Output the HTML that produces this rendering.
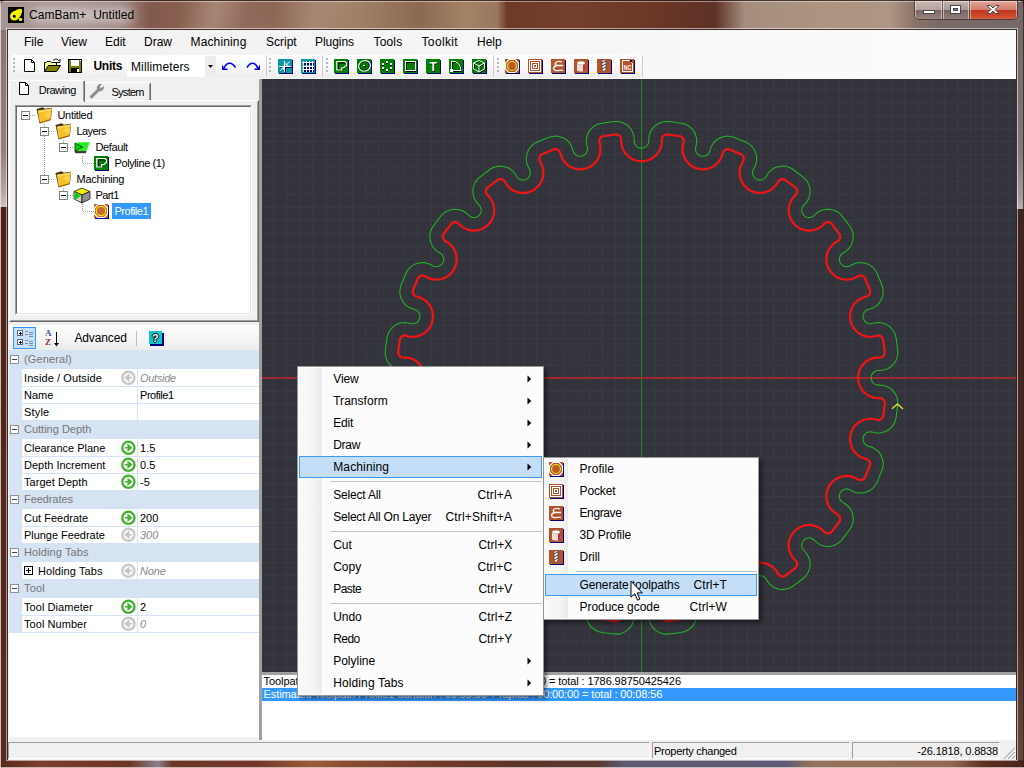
<!DOCTYPE html>
<html><head><meta charset="utf-8"><title>CamBam+ Untitled</title>
<style>
html,body{margin:0;padding:0;}
body{width:1024px;height:768px;position:relative;overflow:hidden;background:#2a0c0a;font-family:"Liberation Sans",sans-serif;font-size:11px;color:#000;}
.a{position:absolute;}
.t{position:absolute;white-space:nowrap;line-height:14px;}
.ui{font-size:12px;line-height:16px;}
/* frame */
#frame{left:0;top:0;width:1024px;height:768px;border-radius:7px 7px 6px 6px;overflow:hidden;background:#6a3426;}
#ftop{left:0;top:0;width:1024px;height:30px;background:linear-gradient(115deg,rgba(255,255,255,0) 0,rgba(255,255,255,0) 170px,rgba(255,235,220,.12) 200px,rgba(255,255,255,0) 230px,rgba(255,235,220,.10) 300px,rgba(255,255,255,0) 330px,rgba(255,255,255,0) 1024px),linear-gradient(90deg,#a69592 0,#a89692 70px,#a08a86 120px,#82594c 150px,#88604f 180px,#9c7868 215px,#906a5a 245px,#8a6252 275px,#9c7a66 310px,#a08064 360px,#8c6a52 420px,#a38266 465px,#9a785e 497px,#6e3a28 507px,#74402c 575px,#6a3626 660px,#5e3226 715px,#a68e7e 745px,#ac9480 820px,#ae9684 890px,#8a7468 915px,#786a66 940px,#74686a 1024px);}
#fleft{left:0;top:30px;width:8px;height:738px;background:linear-gradient(180deg,#8a7470 0,#94807a 120px,#b4a4a0 160px,#cfc4c0 177px,#4e2218 177px,#562a1e 738px);}
#fright{left:1016px;top:30px;width:8px;height:738px;background:linear-gradient(180deg,#726866 0,#80787a 120px,#a09898 165px,#b8b0b0 179px,#3e2420 179px,#4a2a24 600px,#64423a 700px,#684640 738px);}
#fbot{left:0;top:760px;width:1024px;height:8px;background:linear-gradient(90deg,#5a281c 0,#7a3e2c 40px,#6e3424 130px,#8a7f90 158px,#6e3626 172px,#74382a 256px,#9a5c38 310px,#8a4c30 350px,#70382a 450px,#5e3428 520px,#5a3a34 600px,#5e5c74 625px,#5c5a74 785px,#94725c 812px,#946a50 950px,#5e2e22 985px,#4a241c 1024px);}

.tb{top:55px;height:23px;border-radius:3px;background:linear-gradient(180deg,#fdfdfd 0,#f8f8f8 50%,#ededed 100%);}
.pgh{color:#757575;}
#client{left:8px;top:30px;width:1008px;height:730px;background:#f0f0f0;}
</style></head><body>
<div class="a" id="frame">
<div class="a" id="ftop"></div><div class="a" id="fleft"></div><div class="a" id="fright"></div><div class="a" id="fbot"></div>
</div>
<div class="a" id="client"></div>
<!-- title bar -->
<div class="a" style="left:0;top:0;width:1024px;height:1px;background:rgba(40,20,15,.75);"></div>
<div class="a" style="left:1px;top:1px;width:1022px;height:1px;background:rgba(255,255,255,.45);"></div>
<div class="a" style="left:0;top:1px;width:1px;height:767px;background:rgba(235,225,225,.8);"></div>
<div class="a" style="left:1023px;top:1px;width:1px;height:767px;background:rgba(60,30,25,.8);"></div>
<div class="a" style="left:0;top:767px;width:1024px;height:1px;background:rgba(225,215,210,.8);"></div>
<div class="a" style="left:6px;top:28px;width:1012px;height:733px;border:1px solid rgba(255,255,255,.55);box-sizing:border-box;"></div>
<div class="a" style="left:7px;top:29px;width:1010px;height:731px;border:1px solid rgba(50,35,35,.85);box-sizing:border-box;"></div>
<div class="a" style="left:30px;top:8px;width:104px;height:14px;border-radius:7px;background:rgba(255,255,255,.42);filter:blur(5px);"></div>
<svg class="a" style="left:8px;top:7px" width="16" height="16" viewBox="0 0 16 16"><rect width="16" height="16" fill="#000"/><path d="M2 9.5 C2 6 5 4.5 7.5 3.5 C10 2 13.2 1 14 2.5 C14.8 4 13.5 7 12 9.5 C11 11.5 9 13.5 6.5 13.5 C4 13.5 2 12 2 9.5Z" fill="#f4f400"/><circle cx="6.3" cy="9.2" r="1.5" fill="#000"/><circle cx="12.6" cy="12.4" r="1.7" fill="#f4f400"/></svg>
<div class="t ui" style="left:29px;top:7px;letter-spacing:0.05px;">CamBam+&nbsp; Untitled</div>
<!-- caption buttons -->
<div class="a" style="left:914px;top:1px;width:104px;height:19px;border-radius:0 0 5px 5px;border:1px solid rgba(60,40,40,.7);border-top:none;box-sizing:border-box;overflow:hidden;">
 <div class="a" style="left:0;top:0;width:27px;height:19px;background:linear-gradient(180deg,#c9b8b2 0,#b5a29c 45%,#7e6862 50%,#9a8680 100%);border-right:1px solid rgba(60,40,40,.6);box-shadow:inset 0 0 0 1px rgba(255,255,255,.5);"></div>
 <div class="a" style="left:28px;top:0;width:26px;height:19px;background:linear-gradient(180deg,#c4b4ae 0,#ab9a94 45%,#77645e 50%,#94827c 100%);border-right:1px solid rgba(60,40,40,.6);box-shadow:inset 0 0 0 1px rgba(255,255,255,.5);"></div>
 <div class="a" style="left:55px;top:0;width:47px;height:19px;background:linear-gradient(180deg,#e2a598 0,#d27e6c 45%,#c03a20 50%,#cf4a2c 80%,#d86a48 100%);box-shadow:inset 0 0 0 1px rgba(255,255,255,.45);"></div>
</div>
<svg class="a" style="left:914px;top:0" width="104" height="20" viewBox="0 0 104 20">
 <rect x="9.5" y="10.5" width="11" height="3" fill="#fff" stroke="#4a4650" stroke-width="1"/>
 <rect x="36.500" y="5.500" width="10" height="8" fill="#fff" stroke="#4a4650" stroke-width="1"/><rect x="39.5" y="8.5" width="4" height="2" fill="#8a7a76" stroke="#4a4650" stroke-width="1"/>
 <path d="M73 5.500 L76.500 5.500 L79 8 L81.500 5.500 L85 5.500 L81 9.500 L85 13.500 L81.500 13.500 L79 11 L76.500 13.500 L73 13.500 L77 9.500Z" fill="#fff" stroke="#4a4650" stroke-width="1" stroke-linejoin="round"/>
</svg>

<!-- menubar + toolstrip panel bg -->
<div class="a" style="left:8px;top:30px;width:1008px;height:49px;background:linear-gradient(90deg,#f1f1f1 0,#f6f6f6 50%,#fcfcfc 100%);"></div>
<div class="t ui mb" style="left:24px;top:34px;">File</div>
<div class="t ui mb" style="left:61px;top:34px;">View</div>
<div class="t ui mb" style="left:105px;top:34px;">Edit</div>
<div class="t ui mb" style="left:144px;top:34px;">Draw</div>
<div class="t ui mb" style="left:190.500px;top:34px;letter-spacing:0.144px;">Machining</div>
<div class="t ui mb" style="left:266px;top:34px;">Script</div>
<div class="t ui mb" style="left:315px;top:34px;letter-spacing:-0.051px;">Plugins</div>
<div class="t ui mb" style="left:373.500px;top:34px;letter-spacing:0.157px;">Tools</div>
<div class="t ui mb" style="left:421.500px;top:34px;letter-spacing:0.355px;">Toolkit</div>
<div class="t ui mb" style="left:477px;top:34px;">Help</div>

<!-- toolbars -->
<div class="a tb" style="left:11px;width:255px;"></div>
<div class="a tb" style="left:267px;width:55px;"></div>
<div class="a tb" style="left:323px;width:170px;"></div>
<div class="a tb" style="left:494px;width:148px;"></div>
<div class="a" style="left:127px;top:56px;width:78px;height:21px;background:#fff;"></div>
<div class="a" style="left:205px;top:56px;width:11px;height:21px;background:#ededed;"></div>
<div class="t ui" style="left:93.500px;top:58px;font-weight:bold;letter-spacing:-0.300px;">Units</div>
<div class="t ui" style="left:131px;top:59px;letter-spacing:0.122px;">Millimeters</div>
<svg class="a" style="left:8px;top:54px" width="640" height="25" viewBox="8 54 640 25" shape-rendering="crispEdges">
 <g fill="#b8b8b8"><rect x="13" y="58" width="2" height="2"/><rect x="13" y="62" width="2" height="2"/><rect x="13" y="66" width="2" height="2"/><rect x="13" y="70" width="2" height="2"/>
 <rect x="269" y="58" width="2" height="2"/><rect x="269" y="62" width="2" height="2"/><rect x="269" y="66" width="2" height="2"/><rect x="269" y="70" width="2" height="2"/>
 <rect x="326" y="58" width="2" height="2"/><rect x="326" y="62" width="2" height="2"/><rect x="326" y="66" width="2" height="2"/><rect x="326" y="70" width="2" height="2"/>
 <rect x="497" y="58" width="2" height="2"/><rect x="497" y="62" width="2" height="2"/><rect x="497" y="66" width="2" height="2"/><rect x="497" y="70" width="2" height="2"/></g>
 <g fill="#d4cccc"><rect x="266" y="56" width="1" height="21"/><rect x="322" y="56" width="1" height="21"/><rect x="493" y="56" width="1" height="21"/><rect x="642" y="56" width="1" height="21"/></g>
 <!-- new -->
 <path d="M24.500 59.500 H31.500 L34.500 62.500 V71.500 H24.500Z" fill="#fff" stroke="#000" shape-rendering="auto"/><path d="M31.500 59.500 V62.500 H34.500" fill="none" stroke="#000" shape-rendering="auto"/>
 <!-- open -->
 <g shape-rendering="auto"><path d="M44.500 71.500 V62.500 H46 L47 61.500 H50.500 L51.500 62.500 H56.500 V65.500" fill="#f4f48a" stroke="#000"/><path d="M44.500 71.500 L48.500 65.500 H60.500 L56.500 71.500Z" fill="#808000" stroke="#000"/><path d="M53 60.500 C55 58.500 57.500 58.500 59 61" fill="none" stroke="#000"/><path d="M60 59 V62.500 H56.500" fill="none" stroke="#000"/></g>
 <!-- save -->
 <rect x="68" y="59" width="14" height="14" fill="#000"/><rect x="69" y="60" width="12" height="12" fill="#808000"/><rect x="71" y="60" width="8" height="6" fill="#fff"/><rect x="71" y="68" width="8" height="4" fill="#000"/><rect x="77" y="69" width="2" height="3" fill="#fff"/><rect x="80" y="60" width="1" height="1" fill="#fff"/>
 <!-- combo arrow -->
 <path d="M208 65 H213 L210.500 68Z" fill="#000" shape-rendering="auto"/>
 <!-- undo/redo -->
 <g shape-rendering="auto" fill="none" stroke="#0000ff" stroke-width="1.6"><path d="M224 68.500 C226 63 231 60.500 235.500 67.500"/><path d="M247 67.500 C251 60.500 256 63 258 68.500"/></g>
 <path d="M222 64.500 V70 H227.500 V68.500 H224.500Z" fill="#0000ff" shape-rendering="auto"/><path d="M260 64.500 V70 H254.500 V68.500 H257.500Z" fill="#0000ff" shape-rendering="auto"/>
 <!-- teal icons -->
 <g><rect x="279" y="60" width="14" height="14" fill="#000080"/><rect x="278" y="59" width="14" height="14" fill="#0a98a8"/><rect x="285" y="67" width="1" height="6" fill="#000080"/><rect x="286" y="67" width="6" height="1" fill="#000080"/><rect x="284" y="61" width="1" height="11" fill="#fff"/><rect x="279" y="66" width="12" height="1" fill="#fff"/><g shape-rendering="auto"><path d="M290 61.500 L286 65.200 M286 62.800 V65.200 H288.300 M280 70.800 L283.500 67.700 M281.200 67.700 H283.500 V69.800" stroke="#fff" stroke-width=".9" fill="none"/><path d="M280.600 67.500 L282.500 67.500" stroke="#000080" stroke-width=".8"/></g></g>
 <g><rect x="302" y="60" width="14" height="14" fill="#000080"/><rect x="301" y="59" width="14" height="14" fill="#0a98a8"/><g fill="#000080"><rect x="304" y="63" width="2" height="2"/><rect x="307" y="63" width="2" height="2"/><rect x="310" y="63" width="2" height="2"/><rect x="313" y="63" width="1" height="2"/><rect x="304" y="67" width="2" height="2"/><rect x="307" y="67" width="2" height="2"/><rect x="310" y="67" width="2" height="2"/><rect x="313" y="67" width="1" height="2"/><rect x="304" y="70" width="2" height="2"/><rect x="307" y="70" width="2" height="2"/><rect x="310" y="70" width="2" height="2"/><rect x="313" y="70" width="1" height="2"/></g><g fill="#fff"><rect x="303" y="61" width="1" height="11"/><rect x="306" y="61" width="1" height="11"/><rect x="309" y="61" width="1" height="11"/><rect x="312" y="61" width="1" height="11"/><rect x="302" y="62" width="12" height="1"/><rect x="302" y="66" width="12" height="1"/><rect x="302" y="69" width="12" height="1"/></g></g>
 <!-- green icons -->
 <g><rect x="335" y="60" width="14" height="14" fill="#000080"/><rect x="334" y="59" width="14" height="14" fill="#008000"/><g shape-rendering="auto"><path d="M337.500 62.200 H344.500 L345.700 63.500 V65.300 L343.400 67.100 H341.300 V69.300 H337.500Z" fill="none" stroke="#000" stroke-width="1" transform="translate(.8,.8)"/><path d="M336.800 61.500 H345 L346.500 63 V65.500 L343.700 67.700 H341.700 V70 H336.800Z" fill="none" stroke="#fff" stroke-width="1.100"/></g></g>
 <g><rect x="358" y="60" width="14" height="14" fill="#000080"/><rect x="357" y="59" width="14" height="14" fill="#008000"/><g shape-rendering="auto"><ellipse cx="364.500" cy="65.900" rx="4.900" ry="4.300" fill="none" stroke="#000" stroke-width="1" transform="rotate(-20 364.500 65.900)"/><ellipse cx="364.500" cy="65.900" rx="5.900" ry="5.200" fill="none" stroke="#fff" stroke-width="1.100" transform="rotate(-20 364.500 65.900)"/></g><rect x="364" y="66" width="2" height="1" fill="#000"/><rect x="363" y="65" width="2" height="1" fill="#fff"/></g>
 <g><rect x="381" y="60" width="14" height="14" fill="#000080"/><rect x="380" y="59" width="14" height="14" fill="#008000"/><g fill="#000"><rect x="386" y="62" width="2" height="2"/><rect x="390" y="64" width="2" height="2"/><rect x="390" y="68" width="2" height="2"/><rect x="386" y="70" width="2" height="2"/><rect x="382" y="68" width="2" height="2"/><rect x="382" y="64" width="2" height="2"/></g><g fill="#fff"><rect x="386" y="61" width="2" height="2"/><rect x="390" y="63" width="2" height="2"/><rect x="390" y="67" width="2" height="2"/><rect x="386" y="69" width="2" height="2"/><rect x="382" y="67" width="2" height="2"/><rect x="382" y="63" width="2" height="2"/></g></g>
 <g><rect x="404" y="60" width="14" height="14" fill="#000080"/><rect x="403" y="59" width="14" height="14" fill="#008000"/><rect x="406.500" y="62.500" width="9" height="9" fill="none" stroke="#000" stroke-width="1"/><rect x="405.500" y="61.500" width="10" height="9" fill="none" stroke="#fff" stroke-width="1"/></g>
 <g><rect x="427" y="60" width="14" height="14" fill="#000080"/><rect x="426" y="59" width="14" height="14" fill="#008000"/><g shape-rendering="auto" font-family="Liberation Sans, sans-serif" font-weight="bold" font-size="12" text-anchor="middle"><text x="434" y="71.600" fill="#000">T</text><text x="433.200" y="70.800" fill="#fff">T</text></g></g>
 <g><rect x="450" y="60" width="14" height="14" fill="#000080"/><rect x="449" y="59" width="14" height="14" fill="#008000"/><path d="M452.500 71.300 V62 Q461.300 62.500 461.800 71.300Z" fill="none" stroke="#000" stroke-width="1" shape-rendering="auto"/><path d="M451.500 70.500 V61 Q460.500 61.500 461 70.500Z" fill="none" stroke="#fff" stroke-width="1" shape-rendering="auto"/><rect x="450" y="69" width="3" height="3" fill="#fff"/></g>
 <g><rect x="473" y="60" width="14" height="14" fill="#000080"/><rect x="472" y="59" width="14" height="14" fill="#008000"/><path d="M479.800 61.300 L485.300 63.800 V69.800 L479.800 72.800 L474.300 69.800 V63.800Z M474.300 63.800 L479.800 66.800 L485.300 63.800 M479.800 66.800 V72.800" fill="none" stroke="#000" stroke-width=".9" shape-rendering="auto"/><path d="M479 60.500 L484.500 63 V69 L479 72 L473.500 69 V63Z M473.500 63 L479 66 L484.500 63 M479 66 V72" fill="none" stroke="#fff" stroke-width="1" shape-rendering="auto"/></g>
 <!-- brown icons -->
 <g><rect x="506" y="60" width="14" height="14" fill="#000080"/><rect x="505" y="59" width="14" height="14" fill="#b4522a"/><path d="M509 59.500 H515 L518.500 63 V69 L515 72.500 H509 L505.500 69 V63Z" fill="none" stroke="#fff" stroke-width="1.100" shape-rendering="auto"/><circle cx="512" cy="66" r="4.500" fill="#b85a2c" stroke="#f4e800" stroke-width="1.200" shape-rendering="auto"/></g>
 <g><rect x="529" y="60" width="14" height="14" fill="#000080"/><rect x="528" y="59" width="14" height="14" fill="#b4522a"/><rect x="529.500" y="60.500" width="11" height="11" fill="none" stroke="#fff"/><rect x="531.500" y="62.500" width="7" height="7" fill="none" stroke="#fff"/><rect x="533.500" y="64.500" width="3" height="3" fill="none" stroke="#fff"/></g>
 <g><rect x="552" y="60" width="14" height="14" fill="#000080"/><rect x="551" y="59" width="14" height="14" fill="#b4522a"/><path d="M562 62 C558 60.500 554.500 62 555.500 64.500 C556 65.500 558 65.500 560 65.500 M563 65.500 H557 C553 66 552.500 70 556 70.500 C559 71 561 69.500 563 70.500" fill="none" stroke="#fff" stroke-width="1.300" shape-rendering="auto"/></g>
 <g><rect x="575" y="60" width="14" height="14" fill="#000080"/><rect x="574" y="59" width="14" height="14" fill="#b4522a"/><g shape-rendering="auto"><path d="M577 63 V70 C577 72 585 72 585 70 V63Z" fill="#e8e0d8"/><ellipse cx="581" cy="63" rx="4" ry="1.800" fill="#fff" stroke="#999" stroke-width=".5"/><path d="M583 65 V71.500 C584.500 71 585 70.500 585 70 V64Z" fill="#c03030"/></g></g>
 <g><rect x="598" y="60" width="14" height="14" fill="#000080"/><rect x="597" y="59" width="14" height="14" fill="#b4522a"/><g shape-rendering="auto"><path d="M602 60 H606 V69 L604 72 L602 69Z" fill="#fff" stroke="#333" stroke-width=".6"/><path d="M602 63 L606 61 M602 66 L606 64 M602 69 L606 67" stroke="#333" stroke-width="1"/></g></g>
 <g><rect x="621" y="60" width="14" height="14" fill="#000080"/><rect x="620" y="59" width="14" height="14" fill="#b4522a"/><path d="M622.500 60.500 H629.500 L632.500 63.500 V71.500 H622.500Z" fill="none" stroke="#fff" stroke-width="1" shape-rendering="auto"/><text x="627.500" y="70" font-family="Liberation Sans, sans-serif" font-weight="bold" font-size="6.500" text-anchor="middle" fill="#fff" shape-rendering="auto" textLength="7.500" lengthAdjust="spacingAndGlyphs">NC</text><rect x="630" y="60" width="2" height="2" fill="#000"/></g>
</svg>

<!-- left panel -->
<div class="a" style="left:8px;top:79px;width:251px;height:661px;background:#f0f0f0;"></div>
<!-- tab page frame -->
<div class="a" style="left:9px;top:100px;width:250px;height:222px;box-sizing:border-box;border:1px solid;border-color:#fff #696969 #696969 #fff;"></div>
<div class="a" style="left:10px;top:101px;width:248px;height:220px;box-sizing:border-box;border:1px solid;border-color:#f0f0f0 #a0a0a0 #a0a0a0 #f0f0f0;"></div>
<!-- tabs -->
<div class="a" style="left:9px;top:80px;width:76px;height:22px;background:#f0f0f0;border-radius:2px 2px 0 0;box-sizing:border-box;border:1px solid;border-color:#fff #696969 transparent #fff;border-bottom:none;"></div>
<div class="a" style="left:83px;top:81px;width:1px;height:20px;background:#a0a0a0;"></div>
<div class="a" style="left:85px;top:82px;width:66px;height:18px;background:#f0f0f0;border-radius:0 2px 0 0;box-sizing:border-box;border:1px solid;border-color:#fff #696969 transparent transparent;border-bottom:none;"></div>
<div class="a" style="left:149px;top:84px;width:1px;height:16px;background:#a0a0a0;"></div>
<svg class="a" style="left:18px;top:82px" width="14" height="14" viewBox="0 0 14 14"><path d="M1.500 .5 H7.500 L10.500 3.500 V12.500 H1.500Z" fill="#fff" stroke="#000"/><path d="M7.500 .5 V3.500 H10.500" fill="none" stroke="#000"/></svg>
<div class="t" style="left:38.700px;top:83px;letter-spacing:-0.435px;">Drawing</div>
<svg class="a" style="left:88px;top:82px" width="18" height="18" viewBox="0 0 18 18"><path d="M2.500 14 L9.500 7 C8.500 4.500 10.500 2 13.500 2.500 L11.200 4.800 L13 6.800 L15.500 4.500 C16 7.500 13.500 9.500 11.300 8.800 L4.300 15.800 C3 16.800 1.500 15.300 2.500 14Z" fill="#8c8c8c" stroke="#787878" stroke-width=".6"/></svg>
<div class="t" style="left:111.500px;top:85px;letter-spacing:-0.731px;">System</div>
<!-- tree box -->
<div class="a" style="left:15px;top:105px;width:237px;height:210px;box-sizing:border-box;border:1px solid;border-color:#a0a0a0 #fff #fff #a0a0a0;background:#fff;"></div>
<div class="a" style="left:16px;top:106px;width:235px;height:208px;box-sizing:border-box;border:1px solid;border-color:#696969 #e3e3e3 #e3e3e3 #696969;background:#fff;"></div>
<svg class="a" style="left:17px;top:107px" width="233" height="120" viewBox="17 107 233 120" shape-rendering="crispEdges">
 <g stroke="#9a9a9a" stroke-width="1" stroke-dasharray="1 1" fill="none">
  <path d="M30 115.500 H36"/><path d="M44.500 124 V179"/><path d="M49 131.500 H55"/><path d="M49 179.500 H55"/>
  <path d="M63.500 140 V143"/><path d="M68 147.500 H74"/><path d="M82.500 156 V163 M82.500 163.500 H94"/>
  <path d="M63.500 188 V191"/><path d="M68 195.500 H74"/><path d="M82.500 204 V211 M82.500 211.500 H94"/>
 </g>
 <g fill="#fff" stroke="#848484"><rect x="21.500" y="111.500" width="8" height="8"/><rect x="40.500" y="127.500" width="8" height="8"/><rect x="59.500" y="143.500" width="8" height="8"/><rect x="40.500" y="175.500" width="8" height="8"/><rect x="59.500" y="191.500" width="8" height="8"/></g>
 <g fill="#000"><rect x="23" y="115" width="5" height="1"/><rect x="42" y="131" width="5" height="1"/><rect x="61" y="147" width="5" height="1"/><rect x="42" y="179" width="5" height="1"/><rect x="61" y="195" width="5" height="1"/></g>
 <g shape-rendering="auto">
  <g id="fold"><path d="M36.500 109 L42.500 107.300 L45 108.800 L52 107.800 L51 119.500 L39.500 123.200 Z" fill="#4a3410"/><path d="M37.800 110.800 L51.800 108.600 L50.700 119.200 L39.700 122.600Z" fill="#f7bf2e"/><path d="M37.800 110.800 L51.800 108.600 L51.600 110.400 L38 112.600Z" fill="#fbd860"/><path d="M45 113 L50.800 112 L50.400 116.500 L46 117.500Z" fill="#ffd850" opacity=".7"/><path d="M39.700 122.600 L50.700 119.200 L50.500 120.600 L39.800 123.600Z" fill="#9a6c08"/></g>
  <use href="#fold" x="19" y="16"/><use href="#fold" x="19" y="64"/>
  <!-- layer icon -->
  <path d="M77.500 142.300 H89.800 L86.500 151 H74.500Z" fill="#28ee28"/><path d="M74.500 151 H86.500 L85.800 153.300 H75.300Z" fill="#3c3c3c"/><path d="M75 143 L82.500 147 L75 151Z" fill="#00d400" stroke="#0a3a0a" stroke-width=".9"/>
  <!-- polyline icon -->
  <rect x="95" y="157" width="14" height="14" fill="#000080"/><rect x="94" y="156" width="14" height="14" fill="#008000"/><path d="M97.500 159.200 H104.500 L105.700 160.500 V162.300 L103.400 164.100 H101.300 V166.300 H97.500Z" fill="none" stroke="#000" stroke-width="1" transform="translate(.8,.8)"/><path d="M96.800 158.500 H105 L106.500 160 V162.500 L103.700 164.700 H101.700 V167 H96.800Z" fill="none" stroke="#fff" stroke-width="1.200"/>
  <!-- part icon -->
  <path d="M82 188 L90 191.500 L82 195 L74 191.500Z" fill="#f0f000" stroke="#000" stroke-width=".7"/><path d="M74 191.500 L82 195 V203 L74 199Z" fill="#d0d0d0" stroke="#000" stroke-width=".7"/><path d="M82 195 L90 191.500 V199 L82 203Z" fill="#909090" stroke="#000" stroke-width=".7"/><path d="M74.500 192 L81 196 L74.500 200Z" fill="#10d010"/>
  <!-- profile icon -->
  <rect x="95" y="205" width="14" height="14" fill="#000080"/><rect x="94" y="204" width="14" height="14" fill="#c8602a"/><path d="M98 204.500 H104 L107.500 208 V214 L104 217.500 H98 L94.500 214 V208Z" fill="none" stroke="#fff" stroke-width="1.100"/><circle cx="101" cy="211" r="4.700" fill="#c86a38" stroke="#f4e400" stroke-width="1.200"/>
 </g>
</svg>
<div class="a" style="left:112px;top:203px;width:39px;height:16px;background:#3399ff;"></div>
<div class="t tr" style="left:57.500px;top:108px;letter-spacing:-0.327px;">Untitled</div>
<div class="t tr" style="left:76.500px;top:124px;letter-spacing:-0.605px;">Layers</div>
<div class="t tr" style="left:95.500px;top:140px;letter-spacing:-0.382px;">Default</div>
<div class="t tr" style="left:114.500px;top:156px;letter-spacing:-0.394px;">Polyline (1)</div>
<div class="t tr" style="left:76.500px;top:172px;letter-spacing:-0.284px;">Machining</div>
<div class="t tr" style="left:95.500px;top:188px;letter-spacing:-0.623px;">Part1</div>
<div class="t tr" style="left:114.500px;top:204px;letter-spacing:-0.464px;color:#fff;">Profile1</div>
<!-- property grid -->
<div class="a" style="left:9px;top:325px;width:250px;height:25px;background:linear-gradient(180deg,#fcfcfc 0,#f6f5f5 60%,#ebebeb 100%);"></div>
<div class="a" style="left:13px;top:327px;width:23px;height:22px;box-sizing:border-box;border:1px solid #3399ff;background:#c6e0fa;"></div>
<svg class="a" style="left:9px;top:325px" width="170" height="25" viewBox="9 325 170 25" shape-rendering="crispEdges">
 <g fill="#fff" stroke="#5a6a8a"><rect x="17.500" y="330.500" width="5" height="5"/><rect x="17.500" y="339.500" width="5" height="5"/></g>
 <g fill="#000"><rect x="19" y="333" width="3" height="1"/><rect x="20" y="332" width="1" height="3"/><rect x="19" y="342" width="3" height="1"/><rect x="20" y="341" width="1" height="3"/></g>
 <g fill="#7a8aa8"><rect x="25" y="331" width="3" height="1"/><rect x="25" y="334" width="3" height="1"/><rect x="29" y="332" width="4" height="1"/><rect x="29" y="334" width="4" height="1"/><rect x="29" y="336" width="4" height="1"/><rect x="25" y="340" width="3" height="1"/><rect x="25" y="343" width="3" height="1"/><rect x="29" y="341" width="4" height="1"/><rect x="29" y="343" width="4" height="1"/><rect x="29" y="345" width="4" height="1"/></g>
 <rect x="56" y="332" width="1" height="13" fill="#000"/><path d="M54 343 H59 L56.500 346.500Z" fill="#000" shape-rendering="auto"/>
 <rect x="136" y="331" width="1" height="15" fill="#bdbdbd"/>
 <rect x="150" y="333" width="14" height="12.500" fill="#000080"/><rect x="148.500" y="331" width="13.500" height="12.500" fill="#10c4cc"/>
</svg>
<div class="t" style="left:45px;top:328px;font:bold 9px/10px 'Liberation Serif',serif;color:#3a5aa8;">A</div>
<div class="t" style="left:45px;top:337px;font:bold 9px/10px 'Liberation Serif',serif;color:#983030;">Z</div>
<div class="t ui" style="left:74.400px;top:330px;letter-spacing:-0.120px;">Advanced</div>
<div class="t" style="left:152px;top:331.500px;font:bold 11px/13px 'Liberation Sans',sans-serif;color:#fff;text-shadow:1px 0 #000,-1px 0 #000,0 1px #000,0 -1px #000;">?</div>
<div class="a" style="left:9px;top:350px;width:250px;height:283px;background:#d6e3f2;"></div>
<div class="a" style="left:9px;top:633px;width:250px;height:104px;background:#fff;"></div>
<div class="t pgh" style="left:24px;top:352px;letter-spacing:0.148px;">(General)</div>
<div class="a" style="left:22px;top:369px;width:115px;height:17px;background:#fff;"></div>
<div class="a" style="left:138px;top:369px;width:121px;height:17px;background:#fff;"></div>
<div class="t" style="left:24px;top:371px;letter-spacing:0.088px;">Inside / Outside</div>
<div class="t" style="left:140px;top:371px;font-style:italic;color:#8a8a8a;letter-spacing:-0.305px;">Outside</div>
<div class="a" style="left:22px;top:387px;width:115px;height:16px;background:#fff;"></div>
<div class="a" style="left:138px;top:387px;width:121px;height:16px;background:#fff;"></div>
<div class="t" style="left:24px;top:388px;">Name</div>
<div class="t" style="left:140px;top:388px;letter-spacing:-0.452px;">Profile1</div>
<div class="a" style="left:22px;top:404px;width:115px;height:16px;background:#fff;"></div>
<div class="a" style="left:138px;top:404px;width:121px;height:16px;background:#fff;"></div>
<div class="t" style="left:24px;top:405px;letter-spacing:0.186px;">Style</div>
<div class="t" style="left:140px;top:405px;"></div>
<div class="t pgh" style="left:24px;top:422px;">Cutting Depth</div>
<div class="a" style="left:22px;top:439px;width:115px;height:17px;background:#fff;"></div>
<div class="a" style="left:138px;top:439px;width:121px;height:17px;background:#fff;"></div>
<div class="t" style="left:24px;top:441px;">Clearance Plane</div>
<div class="t" style="left:140px;top:441px;">1.5</div>
<div class="a" style="left:22px;top:457px;width:115px;height:16px;background:#fff;"></div>
<div class="a" style="left:138px;top:457px;width:121px;height:16px;background:#fff;"></div>
<div class="t" style="left:24px;top:458px;">Depth Increment</div>
<div class="t" style="left:140px;top:458px;">0.5</div>
<div class="a" style="left:22px;top:474px;width:115px;height:16px;background:#fff;"></div>
<div class="a" style="left:138px;top:474px;width:121px;height:16px;background:#fff;"></div>
<div class="t" style="left:24px;top:475px;letter-spacing:0.047px;">Target Depth</div>
<div class="t" style="left:140px;top:475px;">-5</div>
<div class="t pgh" style="left:24px;top:492px;letter-spacing:-0.074px;">Feedrates</div>
<div class="a" style="left:22px;top:509px;width:115px;height:17px;background:#fff;"></div>
<div class="a" style="left:138px;top:509px;width:121px;height:17px;background:#fff;"></div>
<div class="t" style="left:24px;top:511px;">Cut Feedrate</div>
<div class="t" style="left:140px;top:511px;">200</div>
<div class="a" style="left:22px;top:527px;width:115px;height:16px;background:#fff;"></div>
<div class="a" style="left:138px;top:527px;width:121px;height:16px;background:#fff;"></div>
<div class="t" style="left:24px;top:528px;letter-spacing:-0.040px;">Plunge Feedrate</div>
<div class="t" style="left:140px;top:528px;font-style:italic;color:#8a8a8a;">300</div>
<div class="t pgh" style="left:24px;top:545px;letter-spacing:0.098px;">Holding Tabs</div>
<div class="a" style="left:22px;top:562px;width:115px;height:17px;background:#fff;"></div>
<div class="a" style="left:138px;top:562px;width:121px;height:17px;background:#fff;"></div>
<div class="t" style="left:38px;top:564px;letter-spacing:0.098px;">Holding Tabs</div>
<div class="t" style="left:140px;top:564px;font-style:italic;color:#8a8a8a;letter-spacing:-0.178px;">None</div>
<div class="t pgh" style="left:24px;top:581px;letter-spacing:0.153px;">Tool</div>
<div class="a" style="left:22px;top:598px;width:115px;height:17px;background:#fff;"></div>
<div class="a" style="left:138px;top:598px;width:121px;height:17px;background:#fff;"></div>
<div class="t" style="left:24px;top:600px;letter-spacing:0.071px;">Tool Diameter</div>
<div class="t" style="left:140px;top:600px;">2</div>
<div class="a" style="left:22px;top:616px;width:115px;height:16px;background:#fff;"></div>
<div class="a" style="left:138px;top:616px;width:121px;height:16px;background:#fff;"></div>
<div class="t" style="left:24px;top:617px;letter-spacing:0.057px;">Tool Number</div>
<div class="t" style="left:140px;top:617px;font-style:italic;color:#8a8a8a;">0</div>
<svg class="a" style="left:9px;top:350px" width="250" height="290" viewBox="9 350 250 290" shape-rendering="crispEdges"><rect x="10.5" y="355.5" width="8" height="8" fill="#fff" stroke="#919191"/><rect x="12" y="359" width="5" height="1" fill="#444"/><g shape-rendering="auto"><circle cx="128.400" cy="377.8" r="6.100" fill="#f8f8f8" stroke="#c9c9c9" stroke-width="2.400"/><path d="M132 377.8 H127.800 M128.600 375.2 L125.400 377.8 L128.600 380.4 Z" fill="#c4c4c4" stroke="#c4c4c4" stroke-width="1.500"/></g><rect x="10.5" y="425.5" width="8" height="8" fill="#fff" stroke="#919191"/><rect x="12" y="429" width="5" height="1" fill="#444"/><g shape-rendering="auto"><circle cx="128.400" cy="447.8" r="6.100" fill="#fff" stroke="#45b232" stroke-width="2.400"/><path d="M124.800 447.8 H129 M128.200 445.2 L131.400 447.8 L128.200 450.4 Z" fill="#45b232" stroke="#45b232" stroke-width="1.500"/></g><g shape-rendering="auto"><circle cx="128.400" cy="464.8" r="6.100" fill="#fff" stroke="#45b232" stroke-width="2.400"/><path d="M124.800 464.8 H129 M128.200 462.2 L131.400 464.8 L128.200 467.4 Z" fill="#45b232" stroke="#45b232" stroke-width="1.500"/></g><g shape-rendering="auto"><circle cx="128.400" cy="481.8" r="6.100" fill="#fff" stroke="#45b232" stroke-width="2.400"/><path d="M124.800 481.8 H129 M128.200 479.2 L131.400 481.8 L128.200 484.4 Z" fill="#45b232" stroke="#45b232" stroke-width="1.500"/></g><rect x="10.5" y="495.5" width="8" height="8" fill="#fff" stroke="#919191"/><rect x="12" y="499" width="5" height="1" fill="#444"/><g shape-rendering="auto"><circle cx="128.400" cy="517.8" r="6.100" fill="#fff" stroke="#45b232" stroke-width="2.400"/><path d="M124.800 517.8 H129 M128.200 515.2 L131.400 517.8 L128.200 520.4 Z" fill="#45b232" stroke="#45b232" stroke-width="1.500"/></g><g shape-rendering="auto"><circle cx="128.400" cy="534.8" r="6.100" fill="#f8f8f8" stroke="#c9c9c9" stroke-width="2.400"/><path d="M132 534.8 H127.800 M128.600 532.2 L125.400 534.8 L128.600 537.4 Z" fill="#c4c4c4" stroke="#c4c4c4" stroke-width="1.500"/></g><rect x="10.5" y="548.5" width="8" height="8" fill="#fff" stroke="#919191"/><rect x="12" y="552" width="5" height="1" fill="#444"/><rect x="24.5" y="566.5" width="8" height="8" fill="#fff" stroke="#000"/><rect x="26" y="570" width="5" height="1" fill="#000"/><rect x="28" y="568" width="1" height="5" fill="#000"/><g shape-rendering="auto"><circle cx="128.400" cy="570.8" r="6.100" fill="#f8f8f8" stroke="#c9c9c9" stroke-width="2.400"/><path d="M132 570.8 H127.800 M128.600 568.2 L125.400 570.8 L128.600 573.4 Z" fill="#c4c4c4" stroke="#c4c4c4" stroke-width="1.500"/></g><rect x="10.5" y="584.5" width="8" height="8" fill="#fff" stroke="#919191"/><rect x="12" y="588" width="5" height="1" fill="#444"/><g shape-rendering="auto"><circle cx="128.400" cy="606.8" r="6.100" fill="#fff" stroke="#45b232" stroke-width="2.400"/><path d="M124.800 606.8 H129 M128.200 604.2 L131.400 606.8 L128.200 609.4 Z" fill="#45b232" stroke="#45b232" stroke-width="1.500"/></g><g shape-rendering="auto"><circle cx="128.400" cy="623.8" r="6.100" fill="#f8f8f8" stroke="#c9c9c9" stroke-width="2.400"/><path d="M132 623.8 H127.800 M128.600 621.2 L125.400 623.8 L128.600 626.4 Z" fill="#c4c4c4" stroke="#c4c4c4" stroke-width="1.500"/></g></svg>
<!-- splitter -->
<div class="a" style="left:259px;top:79px;width:3px;height:661px;background:#a0a0a0;"></div>

<!-- canvas -->
<svg class="a" style="left:262px;top:79px" width="754" height="593" viewBox="262 79 754 593">
 <defs><pattern id="grid" x="641.3" y="377.7" width="13.15" height="13.15" patternUnits="userSpaceOnUse"><rect width="13.15" height="13.15" fill="#33333c"/><rect x="0" y="0" width="1" height="13.15" fill="#3a3a44"/><rect x="0" y="0" width="13.15" height="1" fill="#3a3a44"/></pattern></defs>
 <rect x="262" y="79" width="754" height="593" fill="url(#grid)"/>
 <rect x="641" y="79" width="1" height="593" fill="#1c8a1c"/>
 <rect x="262" y="377.200" width="754" height="1.400" fill="#cc2428"/>
 <path d="M634.2 140.9 L634.3 141.9 L634.4 142.8 L634.8 143.7 L635.2 144.6 L635.7 145.3 L636.3 146.1 L637.1 146.7 L637.9 147.2 L638.7 147.6 L639.6 148.0 L640.5 148.1 L641.5 148.2 L642.5 148.1 L643.4 148.0 L644.3 147.6 L645.1 147.2 L645.9 146.7 L646.7 146.1 L647.3 145.3 L647.8 144.6 L648.2 143.7 L648.6 142.8 L648.7 141.9 L648.8 140.9 L648.8 139.5 L649.2 135.7 L650.4 132.0 L652.3 128.7 L654.9 125.9 L658.1 123.7 L661.6 122.2 L665.3 121.5 L669.1 121.6 L681.1 123.2 L684.8 124.1 L688.3 125.8 L691.3 128.1 L693.7 131.0 L695.5 134.4 L696.5 138.1 L696.7 141.9 L696.1 145.7 L695.8 147.1 L695.6 148.0 L695.5 149.0 L695.6 149.9 L695.8 150.9 L696.1 151.8 L696.5 152.6 L697.0 153.4 L697.7 154.1 L698.4 154.8 L699.2 155.3 L700.0 155.7 L700.9 156.0 L701.9 156.2 L702.8 156.3 L703.8 156.2 L704.7 156.0 L705.6 155.7 L706.5 155.3 L707.3 154.8 L708.0 154.1 L708.6 153.4 L709.1 152.6 L709.6 151.8 L709.9 150.9 L710.2 149.5 L711.6 145.9 L713.7 142.7 L716.4 140.0 L719.7 138.0 L723.3 136.7 L727.0 136.1 L730.8 136.4 L734.5 137.5 L745.6 142.1 L749.0 143.9 L751.9 146.4 L754.2 149.5 L755.8 153.0 L756.6 156.7 L756.7 160.5 L755.9 164.3 L754.3 167.7 L753.6 169.0 L753.2 169.8 L752.9 170.7 L752.7 171.7 L752.6 172.6 L752.7 173.6 L752.9 174.5 L753.2 175.4 L753.6 176.3 L754.2 177.1 L754.8 177.8 L755.5 178.4 L756.3 179.0 L757.2 179.4 L758.1 179.7 L759.0 179.9 L760.0 179.9 L760.9 179.9 L761.8 179.7 L762.7 179.4 L763.6 179.0 L764.4 178.4 L765.1 177.8 L765.7 177.1 L766.3 176.3 L767.0 175.0 L769.2 172.0 L772.1 169.4 L775.4 167.5 L779.1 166.4 L782.9 166.0 L786.7 166.5 L790.3 167.8 L793.5 169.8 L803.1 177.1 L805.9 179.7 L808.0 182.9 L809.4 186.4 L810.1 190.2 L809.9 194.0 L809.0 197.7 L807.3 201.1 L804.9 204.1 L803.9 205.1 L803.2 205.8 L802.7 206.6 L802.3 207.5 L802.0 208.4 L801.8 209.3 L801.7 210.3 L801.8 211.2 L802.0 212.2 L802.3 213.1 L802.7 213.9 L803.2 214.7 L803.9 215.4 L804.6 216.1 L805.4 216.6 L806.2 217.0 L807.1 217.3 L808.1 217.5 L809.0 217.6 L810.0 217.5 L810.9 217.3 L811.8 217.0 L812.7 216.6 L813.5 216.1 L814.2 215.4 L815.2 214.4 L818.2 212.0 L821.6 210.3 L825.3 209.4 L829.1 209.2 L832.9 209.9 L836.4 211.3 L839.6 213.4 L842.2 216.2 L849.5 225.8 L851.5 229.0 L852.8 232.6 L853.3 236.4 L852.9 240.2 L851.8 243.9 L849.9 247.2 L847.3 250.1 L844.3 252.3 L843.0 253.0 L842.2 253.6 L841.5 254.2 L840.9 254.9 L840.3 255.7 L839.9 256.6 L839.6 257.5 L839.4 258.4 L839.4 259.3 L839.4 260.3 L839.6 261.2 L839.9 262.1 L840.3 263.0 L840.9 263.8 L841.5 264.5 L842.2 265.1 L843.0 265.7 L843.9 266.1 L844.8 266.4 L845.7 266.6 L846.7 266.6 L847.6 266.6 L848.6 266.4 L849.5 266.1 L850.3 265.7 L851.6 265.0 L855.0 263.4 L858.8 262.6 L862.6 262.7 L866.3 263.5 L869.8 265.1 L872.9 267.4 L875.4 270.3 L877.2 273.7 L881.8 284.8 L882.9 288.5 L883.2 292.3 L882.6 296.0 L881.3 299.6 L879.3 302.9 L876.6 305.6 L873.4 307.7 L869.8 309.1 L868.4 309.4 L867.5 309.7 L866.7 310.2 L865.9 310.7 L865.2 311.3 L864.5 312.0 L864.0 312.8 L863.6 313.7 L863.3 314.6 L863.1 315.5 L863.0 316.5 L863.1 317.4 L863.3 318.4 L863.6 319.3 L864.0 320.1 L864.5 320.9 L865.2 321.6 L865.9 322.3 L866.7 322.8 L867.5 323.2 L868.4 323.5 L869.4 323.7 L870.3 323.8 L871.3 323.7 L872.2 323.5 L873.6 323.2 L877.4 322.6 L881.2 322.8 L884.9 323.8 L888.3 325.6 L891.2 328.0 L893.5 331.0 L895.2 334.5 L896.1 338.2 L897.7 350.2 L897.8 354.0 L897.1 357.7 L895.6 361.2 L893.4 364.4 L890.6 367.0 L887.3 368.9 L883.6 370.1 L879.8 370.5 L878.4 370.5 L877.4 370.6 L876.5 370.7 L875.6 371.1 L874.8 371.5 L874.0 372.0 L873.2 372.6 L872.6 373.4 L872.1 374.1 L871.7 375.0 L871.3 375.9 L871.2 376.8 L871.1 377.8 L871.2 378.8 L871.3 379.7 L871.7 380.6 L872.1 381.4 L872.6 382.2 L873.2 383.0 L874.0 383.6 L874.8 384.1 L875.6 384.5 L876.5 384.9 L877.4 385.0 L878.4 385.1 L879.8 385.1 L883.6 385.5 L887.3 386.7 L890.6 388.6 L893.4 391.2 L895.6 394.4 L897.1 397.9 L897.8 401.6 L897.7 405.4 L896.1 417.4 L895.2 421.1 L893.5 424.6 L891.2 427.6 L888.3 430.0 L884.9 431.8 L881.2 432.8 L877.4 433.0 L873.6 432.4 L872.2 432.1 L871.3 431.9 L870.3 431.8 L869.4 431.9 L868.4 432.1 L867.5 432.4 L866.7 432.8 L865.9 433.3 L865.2 434.0 L864.5 434.7 L864.0 435.5 L863.6 436.3 L863.3 437.2 L863.1 438.2 L863.0 439.1 L863.1 440.1 L863.3 441.0 L863.6 441.9 L864.0 442.8 L864.5 443.6 L865.2 444.3 L865.9 444.9 L866.7 445.4 L867.5 445.9 L868.4 446.2 L869.8 446.5 L873.4 447.9 L876.6 450.0 L879.3 452.7 L881.3 456.0 L882.6 459.6 L883.2 463.3 L882.9 467.1 L881.8 470.8 L877.2 481.9 L875.4 485.3 L872.9 488.2 L869.8 490.5 L866.3 492.1 L862.6 492.9 L858.8 493.0 L855.0 492.2 L851.6 490.6 L850.3 489.9 L849.5 489.5 L848.6 489.2 L847.6 489.0 L846.7 488.9 L845.7 489.0 L844.8 489.2 L843.9 489.5 L843.0 489.9 L842.2 490.5 L841.5 491.1 L840.9 491.8 L840.3 492.6 L839.9 493.5 L839.6 494.4 L839.4 495.3 L839.4 496.2 L839.4 497.2 L839.6 498.1 L839.9 499.0 L840.3 499.9 L840.9 500.7 L841.5 501.4 L842.2 502.0 L843.0 502.6 L844.3 503.3 L847.3 505.5 L849.9 508.4 L851.8 511.7 L852.9 515.4 L853.3 519.2 L852.8 523.0 L851.5 526.6 L849.5 529.8 L842.2 539.4 L839.6 542.2 L836.4 544.3 L832.9 545.7 L829.1 546.4 L825.3 546.2 L821.6 545.3 L818.2 543.6 L815.2 541.2 L814.2 540.2 L813.5 539.5 L812.7 539.0 L811.8 538.6 L810.9 538.3 L810.0 538.1 L809.0 538.0 L808.1 538.1 L807.1 538.3 L806.2 538.6 L805.4 539.0 L804.6 539.5 L803.9 540.2 L803.2 540.9 L802.7 541.7 L802.3 542.5 L802.0 543.4 L801.8 544.4 L801.7 545.3 L801.8 546.3 L802.0 547.2 L802.3 548.1 L802.7 549.0 L803.2 549.8 L803.9 550.5 L804.9 551.5 L807.3 554.5 L809.0 557.9 L809.9 561.6 L810.1 565.4 L809.4 569.2 L808.0 572.7 L805.9 575.9 L803.1 578.5 L793.5 585.8 L790.3 587.8 L786.7 589.1 L782.9 589.6 L779.1 589.2 L775.4 588.1 L772.1 586.2 L769.2 583.6 L767.0 580.6 L766.3 579.3 L765.7 578.5 L765.1 577.8 L764.4 577.2 L763.6 576.6 L762.7 576.2 L761.8 575.9 L760.9 575.7 L760.0 575.7 L759.0 575.7 L758.1 575.9 L757.2 576.2 L756.3 576.6 L755.5 577.2 L754.8 577.8 L754.2 578.5 L753.6 579.3 L753.2 580.2 L752.9 581.1 L752.7 582.0 L752.7 583.0 L752.7 583.9 L752.9 584.9 L753.2 585.8 L753.6 586.6 L754.3 587.9 L755.9 591.3 L756.7 595.1 L756.6 598.9 L755.8 602.6 L754.2 606.1 L751.9 609.2 L749.0 611.7 L745.6 613.5 L734.5 618.1 L730.8 619.2 L727.0 619.5 L723.3 618.9 L719.7 617.6 L716.4 615.6 L713.7 612.9 L711.6 609.7 L710.2 606.1 L709.9 604.7 L709.6 603.8 L709.1 603.0 L708.6 602.2 L708.0 601.5 L707.3 600.8 L706.5 600.3 L705.6 599.9 L704.7 599.6 L703.8 599.4 L702.8 599.3 L701.9 599.4 L700.9 599.6 L700.0 599.9 L699.2 600.3 L698.4 600.8 L697.7 601.5 L697.0 602.2 L696.5 603.0 L696.1 603.8 L695.8 604.7 L695.6 605.7 L695.5 606.6 L695.6 607.6 L695.8 608.5 L696.1 609.9 L696.7 613.7 L696.5 617.5 L695.5 621.2 L693.7 624.6 L691.3 627.5 L688.3 629.8 L684.8 631.5 L681.1 632.4 L669.1 634.0 L665.3 634.1 L661.6 633.4 L658.1 631.9 L654.9 629.7 L652.3 626.9 L650.4 623.6 L649.2 619.9 L648.8 616.1 L648.8 614.7 L648.7 613.7 L648.6 612.8 L648.2 611.9 L647.8 611.0 L647.3 610.3 L646.7 609.5 L645.9 608.9 L645.1 608.4 L644.3 608.0 L643.4 607.6 L642.5 607.5 L641.5 607.4 L640.5 607.5 L639.6 607.6 L638.7 608.0 L637.9 608.4 L637.1 608.9 L636.3 609.5 L635.7 610.3 L635.2 611.0 L634.8 611.9 L634.4 612.8 L634.3 613.7 L634.2 614.7 L634.2 616.1 L633.8 619.9 L632.6 623.6 L630.7 626.9 L628.1 629.7 L624.9 631.9 L621.4 633.4 L617.7 634.1 L613.9 634.0 L601.9 632.4 L598.2 631.5 L594.7 629.8 L591.7 627.5 L589.3 624.6 L587.5 621.2 L586.5 617.5 L586.3 613.7 L586.9 609.9 L587.2 608.5 L587.4 607.6 L587.5 606.6 L587.4 605.7 L587.2 604.7 L586.9 603.8 L586.5 603.0 L586.0 602.2 L585.3 601.5 L584.6 600.8 L583.8 600.3 L583.0 599.9 L582.1 599.6 L581.1 599.4 L580.2 599.3 L579.2 599.4 L578.3 599.6 L577.4 599.9 L576.5 600.3 L575.7 600.8 L575.0 601.5 L574.4 602.2 L573.9 603.0 L573.4 603.8 L573.1 604.7 L572.8 606.1 L571.4 609.7 L569.3 612.9 L566.6 615.6 L563.3 617.6 L559.7 618.9 L556.0 619.5 L552.2 619.2 L548.5 618.1 L537.4 613.5 L534.0 611.7 L531.1 609.2 L528.8 606.1 L527.2 602.6 L526.4 598.9 L526.3 595.1 L527.1 591.3 L528.7 587.9 L529.4 586.6 L529.8 585.8 L530.1 584.9 L530.3 583.9 L530.4 583.0 L530.3 582.0 L530.1 581.1 L529.8 580.2 L529.4 579.3 L528.8 578.5 L528.2 577.8 L527.5 577.2 L526.7 576.6 L525.8 576.2 L524.9 575.9 L524.0 575.7 L523.1 575.7 L522.1 575.7 L521.2 575.9 L520.3 576.2 L519.4 576.6 L518.6 577.2 L517.9 577.8 L517.3 578.5 L516.7 579.3 L516.0 580.6 L513.8 583.6 L510.9 586.2 L507.6 588.1 L503.9 589.2 L500.1 589.6 L496.3 589.1 L492.7 587.8 L489.5 585.8 L479.9 578.5 L477.1 575.9 L475.0 572.7 L473.6 569.2 L472.9 565.4 L473.1 561.6 L474.0 557.9 L475.7 554.5 L478.1 551.5 L479.1 550.5 L479.8 549.8 L480.3 549.0 L480.7 548.1 L481.0 547.2 L481.2 546.3 L481.3 545.3 L481.2 544.4 L481.0 543.4 L480.7 542.5 L480.3 541.7 L479.8 540.9 L479.1 540.2 L478.4 539.5 L477.6 539.0 L476.8 538.6 L475.9 538.3 L474.9 538.1 L474.0 538.0 L473.0 538.1 L472.1 538.3 L471.2 538.6 L470.3 539.0 L469.5 539.5 L468.8 540.2 L467.8 541.2 L464.8 543.6 L461.4 545.3 L457.7 546.2 L453.9 546.4 L450.1 545.7 L446.6 544.3 L443.4 542.2 L440.8 539.4 L433.5 529.8 L431.5 526.6 L430.2 523.0 L429.7 519.2 L430.1 515.4 L431.2 511.7 L433.1 508.4 L435.7 505.5 L438.7 503.3 L440.0 502.6 L440.8 502.0 L441.5 501.4 L442.1 500.7 L442.7 499.9 L443.1 499.0 L443.4 498.1 L443.6 497.2 L443.6 496.3 L443.6 495.3 L443.4 494.4 L443.1 493.5 L442.7 492.6 L442.1 491.8 L441.5 491.1 L440.8 490.5 L440.0 489.9 L439.1 489.5 L438.2 489.2 L437.3 489.0 L436.3 489.0 L435.4 489.0 L434.4 489.2 L433.5 489.5 L432.7 489.9 L431.4 490.6 L428.0 492.2 L424.2 493.0 L420.4 492.9 L416.7 492.1 L413.2 490.5 L410.1 488.2 L407.6 485.3 L405.8 481.9 L401.2 470.8 L400.1 467.1 L399.8 463.3 L400.4 459.6 L401.7 456.0 L403.7 452.7 L406.4 450.0 L409.6 447.9 L413.2 446.5 L414.6 446.2 L415.5 445.9 L416.3 445.4 L417.1 444.9 L417.8 444.3 L418.5 443.6 L419.0 442.8 L419.4 441.9 L419.7 441.0 L419.9 440.1 L420.0 439.1 L419.9 438.2 L419.7 437.2 L419.4 436.3 L419.0 435.5 L418.5 434.7 L417.8 434.0 L417.1 433.3 L416.3 432.8 L415.5 432.4 L414.6 432.1 L413.6 431.9 L412.7 431.8 L411.7 431.9 L410.8 432.1 L409.4 432.4 L405.6 433.0 L401.8 432.8 L398.1 431.8 L394.7 430.0 L391.8 427.6 L389.5 424.6 L387.8 421.1 L386.9 417.4 L385.3 405.4 L385.2 401.6 L385.9 397.9 L387.4 394.4 L389.6 391.2 L392.4 388.6 L395.7 386.7 L399.4 385.5 L403.2 385.1 L404.6 385.1 L405.6 385.0 L406.5 384.9 L407.4 384.5 L408.2 384.1 L409.0 383.6 L409.8 383.0 L410.4 382.2 L410.9 381.5 L411.3 380.6 L411.7 379.7 L411.8 378.8 L411.9 377.8 L411.8 376.8 L411.7 375.9 L411.3 375.0 L410.9 374.2 L410.4 373.4 L409.8 372.6 L409.0 372.0 L408.2 371.5 L407.4 371.1 L406.5 370.7 L405.6 370.6 L404.6 370.5 L403.2 370.5 L399.4 370.1 L395.7 368.9 L392.4 367.0 L389.6 364.4 L387.4 361.2 L385.9 357.7 L385.2 354.0 L385.3 350.2 L386.9 338.2 L387.8 334.5 L389.5 331.0 L391.8 328.0 L394.7 325.6 L398.1 323.8 L401.8 322.8 L405.6 322.6 L409.4 323.2 L410.8 323.5 L411.7 323.7 L412.7 323.8 L413.6 323.7 L414.6 323.5 L415.5 323.2 L416.3 322.8 L417.1 322.3 L417.8 321.6 L418.5 320.9 L419.0 320.1 L419.4 319.3 L419.7 318.4 L419.9 317.4 L420.0 316.5 L419.9 315.5 L419.7 314.6 L419.4 313.7 L419.0 312.8 L418.5 312.0 L417.8 311.3 L417.1 310.7 L416.3 310.2 L415.5 309.7 L414.6 309.4 L413.2 309.1 L409.6 307.7 L406.4 305.6 L403.7 302.9 L401.7 299.6 L400.4 296.0 L399.8 292.3 L400.1 288.5 L401.2 284.8 L405.8 273.7 L407.6 270.3 L410.1 267.4 L413.2 265.1 L416.7 263.5 L420.4 262.7 L424.2 262.6 L428.0 263.4 L431.4 265.0 L432.7 265.7 L433.5 266.1 L434.4 266.4 L435.4 266.6 L436.3 266.7 L437.3 266.6 L438.2 266.4 L439.1 266.1 L440.0 265.7 L440.8 265.1 L441.5 264.5 L442.1 263.8 L442.7 263.0 L443.1 262.1 L443.4 261.2 L443.6 260.3 L443.6 259.4 L443.6 258.4 L443.4 257.5 L443.1 256.6 L442.7 255.7 L442.1 254.9 L441.5 254.2 L440.8 253.6 L440.0 253.0 L438.7 252.3 L435.7 250.1 L433.1 247.2 L431.2 243.9 L430.1 240.2 L429.7 236.4 L430.2 232.6 L431.5 229.0 L433.5 225.8 L440.8 216.2 L443.4 213.4 L446.6 211.3 L450.1 209.9 L453.9 209.2 L457.7 209.4 L461.4 210.3 L464.8 212.0 L467.8 214.4 L468.8 215.4 L469.5 216.1 L470.3 216.6 L471.2 217.0 L472.1 217.3 L473.0 217.5 L474.0 217.6 L474.9 217.5 L475.9 217.3 L476.8 217.0 L477.6 216.6 L478.4 216.1 L479.1 215.4 L479.8 214.7 L480.3 213.9 L480.7 213.1 L481.0 212.2 L481.2 211.2 L481.3 210.3 L481.2 209.3 L481.0 208.4 L480.7 207.5 L480.3 206.6 L479.8 205.8 L479.1 205.1 L478.1 204.1 L475.7 201.1 L474.0 197.7 L473.1 194.0 L472.9 190.2 L473.6 186.4 L475.0 182.9 L477.1 179.7 L479.9 177.1 L489.5 169.8 L492.7 167.8 L496.3 166.5 L500.1 166.0 L503.9 166.4 L507.6 167.5 L510.9 169.4 L513.8 172.0 L516.0 175.0 L516.7 176.3 L517.3 177.1 L517.9 177.8 L518.6 178.4 L519.4 179.0 L520.3 179.4 L521.2 179.7 L522.1 179.9 L523.0 179.9 L524.0 179.9 L524.9 179.7 L525.8 179.4 L526.7 179.0 L527.5 178.4 L528.2 177.8 L528.8 177.1 L529.4 176.3 L529.8 175.4 L530.1 174.5 L530.3 173.6 L530.3 172.6 L530.3 171.7 L530.1 170.7 L529.8 169.8 L529.4 169.0 L528.7 167.7 L527.1 164.3 L526.3 160.5 L526.4 156.7 L527.2 153.0 L528.8 149.5 L531.1 146.4 L534.0 143.9 L537.4 142.1 L548.5 137.5 L552.2 136.4 L556.0 136.1 L559.7 136.7 L563.3 138.0 L566.6 140.0 L569.3 142.7 L571.4 145.9 L572.8 149.5 L573.1 150.9 L573.4 151.8 L573.9 152.6 L574.4 153.4 L575.0 154.1 L575.7 154.8 L576.5 155.3 L577.4 155.7 L578.3 156.0 L579.2 156.2 L580.2 156.3 L581.1 156.2 L582.1 156.0 L583.0 155.7 L583.8 155.3 L584.6 154.8 L585.3 154.1 L586.0 153.4 L586.5 152.6 L586.9 151.8 L587.2 150.9 L587.4 149.9 L587.5 149.0 L587.4 148.0 L587.2 147.1 L586.9 145.7 L586.3 141.9 L586.5 138.1 L587.5 134.4 L589.3 131.0 L591.7 128.1 L594.7 125.8 L598.2 124.1 L601.9 123.2 L613.9 121.6 L617.7 121.5 L621.4 122.2 L624.9 123.7 L628.1 125.9 L630.7 128.7 L632.6 132.0 L633.8 135.7 L634.2 139.5Z" fill="none" stroke="#20c420" stroke-width="1.050" stroke-opacity=".9"/>
 <path d="M621.2 140.9 L621.4 143.5 L621.9 146.2 L622.7 148.7 L623.9 151.1 L625.4 153.3 L627.1 155.3 L629.1 157.0 L631.4 158.5 L633.7 159.7 L636.2 160.5 L638.9 161.0 L641.5 161.2 L644.1 161.0 L646.8 160.5 L649.3 159.7 L651.6 158.5 L653.9 157.0 L655.9 155.3 L657.6 153.3 L659.1 151.1 L660.3 148.7 L661.1 146.2 L661.6 143.5 L661.8 140.9 L661.8 139.5 L661.9 138.4 L662.2 137.4 L662.8 136.5 L663.5 135.7 L664.4 135.1 L665.3 134.7 L666.4 134.5 L667.5 134.5 L679.4 136.1 L680.4 136.3 L681.4 136.8 L682.2 137.4 L682.9 138.3 L683.4 139.2 L683.7 140.2 L683.7 141.3 L683.6 142.3 L683.2 143.7 L682.7 146.3 L682.5 149.0 L682.7 151.6 L683.2 154.2 L684.1 156.7 L685.2 159.1 L686.7 161.3 L688.5 163.3 L690.5 165.1 L692.7 166.6 L695.0 167.7 L697.6 168.6 L700.2 169.1 L702.8 169.3 L705.5 169.1 L708.1 168.6 L710.6 167.7 L713.0 166.6 L715.2 165.1 L717.2 163.3 L718.9 161.3 L720.4 159.1 L721.6 156.7 L722.4 154.2 L722.8 152.8 L723.2 151.8 L723.8 151.0 L724.5 150.2 L725.4 149.6 L726.4 149.3 L727.5 149.1 L728.5 149.2 L729.5 149.5 L740.7 154.1 L741.6 154.6 L742.4 155.3 L743.0 156.2 L743.5 157.1 L743.7 158.2 L743.7 159.2 L743.5 160.3 L743.1 161.2 L742.4 162.5 L741.2 164.9 L740.3 167.4 L739.8 170.0 L739.6 172.6 L739.8 175.3 L740.3 177.9 L741.2 180.4 L742.4 182.8 L743.8 185.0 L745.6 187.0 L747.6 188.7 L749.8 190.2 L752.2 191.4 L754.7 192.2 L757.3 192.8 L760.0 192.9 L762.6 192.8 L765.2 192.2 L767.7 191.4 L770.1 190.2 L772.3 188.7 L774.3 187.0 L776.1 185.0 L777.5 182.8 L778.2 181.5 L778.9 180.7 L779.7 180.0 L780.6 179.5 L781.6 179.1 L782.7 179.0 L783.7 179.2 L784.7 179.5 L785.6 180.1 L795.2 187.4 L796.0 188.1 L796.5 189.0 L796.9 190.0 L797.1 191.1 L797.1 192.1 L796.8 193.1 L796.3 194.1 L795.7 194.9 L794.7 195.9 L792.9 197.9 L791.4 200.1 L790.3 202.5 L789.4 205.0 L788.9 207.6 L788.7 210.3 L788.9 212.9 L789.4 215.5 L790.3 218.1 L791.4 220.4 L792.9 222.6 L794.7 224.6 L796.7 226.4 L798.9 227.9 L801.2 229.0 L803.8 229.9 L806.4 230.4 L809.0 230.6 L811.7 230.4 L814.3 229.9 L816.8 229.0 L819.2 227.9 L821.4 226.4 L823.4 224.6 L824.4 223.6 L825.2 223.0 L826.2 222.5 L827.2 222.2 L828.2 222.2 L829.3 222.4 L830.3 222.8 L831.2 223.3 L831.9 224.1 L839.2 233.7 L839.8 234.6 L840.1 235.6 L840.3 236.6 L840.2 237.7 L839.8 238.7 L839.3 239.6 L838.6 240.4 L837.8 241.1 L836.5 241.8 L834.3 243.2 L832.3 245.0 L830.6 247.0 L829.1 249.2 L827.9 251.6 L827.1 254.1 L826.5 256.7 L826.4 259.3 L826.5 262.0 L827.1 264.6 L827.9 267.1 L829.1 269.5 L830.6 271.7 L832.3 273.7 L834.3 275.5 L836.5 276.9 L838.9 278.1 L841.4 279.0 L844.0 279.5 L846.7 279.6 L849.3 279.5 L851.9 279.0 L854.4 278.1 L856.8 276.9 L858.1 276.2 L859.0 275.8 L860.1 275.6 L861.1 275.6 L862.2 275.8 L863.1 276.3 L864.0 276.9 L864.7 277.7 L865.2 278.6 L869.8 289.8 L870.1 290.8 L870.2 291.8 L870.0 292.9 L869.7 293.9 L869.1 294.8 L868.3 295.5 L867.5 296.1 L866.5 296.5 L865.1 296.9 L862.6 297.7 L860.2 298.9 L858.0 300.4 L856.0 302.1 L854.2 304.1 L852.7 306.3 L851.6 308.7 L850.7 311.2 L850.2 313.8 L850.0 316.5 L850.2 319.1 L850.7 321.7 L851.6 324.3 L852.7 326.6 L854.2 328.8 L856.0 330.8 L858.0 332.6 L860.2 334.1 L862.6 335.2 L865.1 336.1 L867.7 336.6 L870.3 336.8 L873.0 336.6 L875.6 336.1 L877.0 335.7 L878.0 335.6 L879.1 335.6 L880.1 335.9 L881.0 336.4 L881.9 337.1 L882.5 337.9 L883.0 338.9 L883.2 339.9 L884.8 351.8 L884.8 352.9 L884.6 354.0 L884.2 354.9 L883.6 355.8 L882.8 356.5 L881.9 357.1 L880.9 357.4 L879.8 357.5 L878.4 357.5 L875.8 357.7 L873.1 358.2 L870.6 359.0 L868.2 360.2 L866.0 361.7 L864.0 363.4 L862.3 365.4 L860.8 367.6 L859.6 370.0 L858.8 372.5 L858.3 375.2 L858.1 377.8 L858.3 380.4 L858.8 383.1 L859.6 385.6 L860.8 387.9 L862.3 390.2 L864.0 392.2 L866.0 393.9 L868.2 395.4 L870.6 396.6 L873.1 397.4 L875.8 397.9 L878.4 398.1 L879.8 398.1 L880.9 398.2 L881.9 398.5 L882.8 399.1 L883.6 399.8 L884.2 400.7 L884.6 401.6 L884.8 402.7 L884.8 403.8 L883.2 415.7 L883.0 416.7 L882.5 417.7 L881.9 418.5 L881.0 419.2 L880.1 419.7 L879.1 420.0 L878.0 420.0 L877.0 419.9 L875.6 419.5 L873.0 419.0 L870.3 418.8 L867.7 419.0 L865.1 419.5 L862.6 420.4 L860.2 421.5 L858.0 423.0 L856.0 424.8 L854.2 426.8 L852.7 429.0 L851.6 431.3 L850.7 433.9 L850.2 436.5 L850.0 439.1 L850.2 441.8 L850.7 444.4 L851.6 446.9 L852.7 449.3 L854.2 451.5 L856.0 453.5 L858.0 455.2 L860.2 456.7 L862.6 457.9 L865.1 458.7 L866.5 459.1 L867.5 459.5 L868.3 460.1 L869.1 460.8 L869.7 461.7 L870.0 462.7 L870.2 463.8 L870.1 464.8 L869.8 465.8 L865.2 477.0 L864.7 477.9 L864.0 478.7 L863.1 479.3 L862.2 479.8 L861.1 480.0 L860.1 480.0 L859.0 479.8 L858.1 479.4 L856.8 478.7 L854.4 477.5 L851.9 476.6 L849.3 476.1 L846.7 475.9 L844.0 476.1 L841.4 476.6 L838.9 477.5 L836.5 478.7 L834.3 480.1 L832.3 481.9 L830.6 483.9 L829.1 486.1 L827.9 488.5 L827.1 491.0 L826.5 493.6 L826.4 496.2 L826.5 498.9 L827.1 501.5 L827.9 504.0 L829.1 506.4 L830.6 508.6 L832.3 510.6 L834.3 512.4 L836.5 513.8 L837.8 514.5 L838.6 515.2 L839.3 516.0 L839.8 516.9 L840.2 517.9 L840.3 519.0 L840.1 520.0 L839.8 521.0 L839.2 521.9 L831.9 531.5 L831.2 532.3 L830.3 532.8 L829.3 533.2 L828.2 533.4 L827.2 533.4 L826.2 533.1 L825.2 532.6 L824.4 532.0 L823.4 531.0 L821.4 529.2 L819.2 527.7 L816.8 526.6 L814.3 525.7 L811.7 525.2 L809.0 525.0 L806.4 525.2 L803.8 525.7 L801.2 526.6 L798.9 527.7 L796.7 529.2 L794.7 531.0 L792.9 533.0 L791.4 535.2 L790.3 537.5 L789.4 540.1 L788.9 542.7 L788.7 545.3 L788.9 548.0 L789.4 550.6 L790.3 553.1 L791.4 555.5 L792.9 557.7 L794.7 559.7 L795.7 560.7 L796.3 561.5 L796.8 562.5 L797.1 563.5 L797.1 564.5 L796.9 565.6 L796.5 566.6 L796.0 567.5 L795.2 568.2 L785.6 575.5 L784.7 576.1 L783.7 576.4 L782.7 576.6 L781.6 576.5 L780.6 576.1 L779.7 575.6 L778.9 574.9 L778.2 574.1 L777.5 572.8 L776.1 570.6 L774.3 568.6 L772.3 566.9 L770.1 565.4 L767.7 564.2 L765.2 563.4 L762.6 562.8 L760.0 562.7 L757.3 562.8 L754.7 563.4 L752.2 564.2 L749.8 565.4 L747.6 566.9 L745.6 568.6 L743.8 570.6 L742.4 572.8 L741.2 575.2 L740.3 577.7 L739.8 580.3 L739.7 583.0 L739.8 585.6 L740.3 588.2 L741.2 590.7 L742.4 593.1 L743.1 594.4 L743.5 595.3 L743.7 596.4 L743.7 597.4 L743.5 598.5 L743.0 599.4 L742.4 600.3 L741.6 601.0 L740.7 601.5 L729.5 606.1 L728.5 606.4 L727.5 606.5 L726.4 606.3 L725.4 606.0 L724.5 605.4 L723.8 604.6 L723.2 603.8 L722.8 602.8 L722.4 601.4 L721.6 598.9 L720.4 596.5 L718.9 594.3 L717.2 592.3 L715.2 590.5 L713.0 589.0 L710.6 587.9 L708.1 587.0 L705.5 586.5 L702.8 586.3 L700.2 586.5 L697.6 587.0 L695.0 587.9 L692.7 589.0 L690.5 590.5 L688.5 592.3 L686.7 594.3 L685.2 596.5 L684.1 598.9 L683.2 601.4 L682.7 604.0 L682.5 606.6 L682.7 609.3 L683.2 611.9 L683.6 613.3 L683.7 614.3 L683.7 615.4 L683.4 616.4 L682.9 617.3 L682.2 618.2 L681.4 618.8 L680.4 619.3 L679.4 619.5 L667.5 621.1 L666.4 621.1 L665.3 620.9 L664.4 620.5 L663.5 619.9 L662.8 619.1 L662.2 618.2 L661.9 617.2 L661.8 616.1 L661.8 614.7 L661.6 612.1 L661.1 609.4 L660.3 606.9 L659.1 604.5 L657.6 602.3 L655.9 600.3 L653.9 598.6 L651.6 597.1 L649.3 595.9 L646.8 595.1 L644.1 594.6 L641.5 594.4 L638.9 594.6 L636.2 595.1 L633.7 595.9 L631.4 597.1 L629.1 598.6 L627.1 600.3 L625.4 602.3 L623.9 604.5 L622.7 606.9 L621.9 609.4 L621.4 612.1 L621.2 614.7 L621.2 616.1 L621.1 617.2 L620.8 618.2 L620.2 619.1 L619.5 619.9 L618.6 620.5 L617.7 620.9 L616.6 621.1 L615.5 621.1 L603.6 619.5 L602.6 619.3 L601.6 618.8 L600.8 618.2 L600.1 617.3 L599.6 616.4 L599.3 615.4 L599.3 614.3 L599.4 613.3 L599.8 611.9 L600.3 609.3 L600.5 606.6 L600.3 604.0 L599.8 601.4 L598.9 598.9 L597.8 596.5 L596.3 594.3 L594.5 592.3 L592.5 590.5 L590.3 589.0 L588.0 587.9 L585.4 587.0 L582.8 586.5 L580.2 586.3 L577.5 586.5 L574.9 587.0 L572.4 587.9 L570.0 589.0 L567.8 590.5 L565.8 592.3 L564.1 594.3 L562.6 596.5 L561.4 598.9 L560.6 601.4 L560.2 602.8 L559.8 603.8 L559.2 604.6 L558.5 605.4 L557.6 606.0 L556.6 606.3 L555.5 606.5 L554.5 606.4 L553.5 606.1 L542.3 601.5 L541.4 601.0 L540.6 600.3 L540.0 599.4 L539.5 598.5 L539.3 597.4 L539.3 596.4 L539.5 595.3 L539.9 594.4 L540.6 593.1 L541.8 590.7 L542.7 588.2 L543.2 585.6 L543.4 583.0 L543.2 580.3 L542.7 577.7 L541.8 575.2 L540.6 572.8 L539.2 570.6 L537.4 568.6 L535.4 566.9 L533.2 565.4 L530.8 564.2 L528.3 563.4 L525.7 562.8 L523.1 562.7 L520.4 562.8 L517.8 563.4 L515.3 564.2 L512.9 565.4 L510.7 566.9 L508.7 568.6 L506.9 570.6 L505.5 572.8 L504.8 574.1 L504.1 574.9 L503.3 575.6 L502.4 576.1 L501.4 576.5 L500.3 576.6 L499.3 576.4 L498.3 576.1 L497.4 575.5 L487.8 568.2 L487.0 567.5 L486.5 566.6 L486.1 565.6 L485.9 564.5 L485.9 563.5 L486.2 562.5 L486.7 561.5 L487.3 560.7 L488.3 559.7 L490.1 557.7 L491.6 555.5 L492.7 553.1 L493.6 550.6 L494.1 548.0 L494.3 545.3 L494.1 542.7 L493.6 540.1 L492.7 537.5 L491.6 535.2 L490.1 533.0 L488.3 531.0 L486.3 529.2 L484.1 527.7 L481.8 526.6 L479.2 525.7 L476.6 525.2 L474.0 525.0 L471.3 525.2 L468.7 525.7 L466.2 526.6 L463.8 527.7 L461.6 529.2 L459.6 531.0 L458.6 532.0 L457.8 532.6 L456.8 533.1 L455.8 533.4 L454.8 533.4 L453.7 533.2 L452.7 532.8 L451.8 532.3 L451.1 531.5 L443.8 521.9 L443.2 521.0 L442.9 520.0 L442.7 519.0 L442.8 517.9 L443.2 516.9 L443.7 516.0 L444.4 515.2 L445.2 514.5 L446.5 513.8 L448.7 512.4 L450.7 510.6 L452.4 508.6 L453.9 506.4 L455.1 504.0 L455.9 501.5 L456.5 498.9 L456.6 496.3 L456.5 493.6 L455.9 491.0 L455.1 488.5 L453.9 486.1 L452.4 483.9 L450.7 481.9 L448.7 480.1 L446.5 478.7 L444.1 477.5 L441.6 476.6 L439.0 476.1 L436.3 476.0 L433.7 476.1 L431.1 476.6 L428.6 477.5 L426.2 478.7 L424.9 479.4 L424.0 479.8 L422.9 480.0 L421.9 480.0 L420.8 479.8 L419.9 479.3 L419.0 478.7 L418.3 477.9 L417.8 477.0 L413.2 465.8 L412.9 464.8 L412.8 463.8 L413.0 462.7 L413.3 461.7 L413.9 460.8 L414.7 460.1 L415.5 459.5 L416.5 459.1 L417.9 458.7 L420.4 457.9 L422.8 456.7 L425.0 455.2 L427.0 453.5 L428.8 451.5 L430.3 449.3 L431.4 446.9 L432.3 444.4 L432.8 441.8 L433.0 439.1 L432.8 436.5 L432.3 433.9 L431.4 431.3 L430.3 429.0 L428.8 426.8 L427.0 424.8 L425.0 423.0 L422.8 421.5 L420.4 420.4 L417.9 419.5 L415.3 419.0 L412.7 418.8 L410.0 419.0 L407.4 419.5 L406.0 419.9 L405.0 420.0 L403.9 420.0 L402.9 419.7 L402.0 419.2 L401.1 418.5 L400.5 417.7 L400.0 416.7 L399.8 415.7 L398.2 403.8 L398.2 402.7 L398.4 401.6 L398.8 400.7 L399.4 399.8 L400.2 399.1 L401.1 398.5 L402.1 398.2 L403.2 398.1 L404.6 398.1 L407.2 397.9 L409.9 397.4 L412.4 396.6 L414.8 395.4 L417.0 393.9 L419.0 392.2 L420.7 390.2 L422.2 388.0 L423.4 385.6 L424.2 383.1 L424.7 380.4 L424.9 377.8 L424.7 375.2 L424.2 372.5 L423.4 370.0 L422.2 367.7 L420.7 365.4 L419.0 363.4 L417.0 361.7 L414.8 360.2 L412.4 359.0 L409.9 358.2 L407.2 357.7 L404.6 357.5 L403.2 357.5 L402.1 357.4 L401.1 357.1 L400.2 356.5 L399.4 355.8 L398.8 354.9 L398.4 354.0 L398.2 352.9 L398.2 351.8 L399.8 339.9 L400.0 338.9 L400.5 337.9 L401.1 337.1 L402.0 336.4 L402.9 335.9 L403.9 335.6 L405.0 335.6 L406.0 335.7 L407.4 336.1 L410.0 336.6 L412.7 336.8 L415.3 336.6 L417.9 336.1 L420.4 335.2 L422.8 334.1 L425.0 332.6 L427.0 330.8 L428.8 328.8 L430.3 326.6 L431.4 324.3 L432.3 321.7 L432.8 319.1 L433.0 316.5 L432.8 313.8 L432.3 311.2 L431.4 308.7 L430.3 306.3 L428.8 304.1 L427.0 302.1 L425.0 300.4 L422.8 298.9 L420.4 297.7 L417.9 296.9 L416.5 296.5 L415.5 296.1 L414.7 295.5 L413.9 294.8 L413.3 293.9 L413.0 292.9 L412.8 291.8 L412.9 290.8 L413.2 289.8 L417.8 278.6 L418.3 277.7 L419.0 276.9 L419.9 276.3 L420.8 275.8 L421.9 275.6 L422.9 275.6 L424.0 275.8 L424.9 276.2 L426.2 276.9 L428.6 278.1 L431.1 279.0 L433.7 279.5 L436.3 279.7 L439.0 279.5 L441.6 279.0 L444.1 278.1 L446.5 276.9 L448.7 275.5 L450.7 273.7 L452.4 271.7 L453.9 269.5 L455.1 267.1 L455.9 264.6 L456.5 262.0 L456.6 259.4 L456.5 256.7 L455.9 254.1 L455.1 251.6 L453.9 249.2 L452.4 247.0 L450.7 245.0 L448.7 243.2 L446.5 241.8 L445.2 241.1 L444.4 240.4 L443.7 239.6 L443.2 238.7 L442.8 237.7 L442.7 236.6 L442.9 235.6 L443.2 234.6 L443.8 233.7 L451.1 224.1 L451.8 223.3 L452.7 222.8 L453.7 222.4 L454.8 222.2 L455.8 222.2 L456.8 222.5 L457.8 223.0 L458.6 223.6 L459.6 224.6 L461.6 226.4 L463.8 227.9 L466.2 229.0 L468.7 229.9 L471.3 230.4 L474.0 230.6 L476.6 230.4 L479.2 229.9 L481.8 229.0 L484.1 227.9 L486.3 226.4 L488.3 224.6 L490.1 222.6 L491.6 220.4 L492.7 218.1 L493.6 215.5 L494.1 212.9 L494.3 210.3 L494.1 207.6 L493.6 205.0 L492.7 202.5 L491.6 200.1 L490.1 197.9 L488.3 195.9 L487.3 194.9 L486.7 194.1 L486.2 193.1 L485.9 192.1 L485.9 191.1 L486.1 190.0 L486.5 189.0 L487.0 188.1 L487.8 187.4 L497.4 180.1 L498.3 179.5 L499.3 179.2 L500.3 179.0 L501.4 179.1 L502.4 179.5 L503.3 180.0 L504.1 180.7 L504.8 181.5 L505.5 182.8 L506.9 185.0 L508.7 187.0 L510.7 188.7 L512.9 190.2 L515.3 191.4 L517.8 192.2 L520.4 192.8 L523.0 192.9 L525.7 192.8 L528.3 192.2 L530.8 191.4 L533.2 190.2 L535.4 188.7 L537.4 187.0 L539.2 185.0 L540.6 182.8 L541.8 180.4 L542.7 177.9 L543.2 175.3 L543.3 172.6 L543.2 170.0 L542.7 167.4 L541.8 164.9 L540.6 162.5 L539.9 161.2 L539.5 160.3 L539.3 159.2 L539.3 158.2 L539.5 157.1 L540.0 156.2 L540.6 155.3 L541.4 154.6 L542.3 154.1 L553.5 149.5 L554.5 149.2 L555.5 149.1 L556.6 149.3 L557.6 149.6 L558.5 150.2 L559.2 151.0 L559.8 151.8 L560.2 152.8 L560.6 154.2 L561.4 156.7 L562.6 159.1 L564.1 161.3 L565.8 163.3 L567.8 165.1 L570.0 166.6 L572.4 167.7 L574.9 168.6 L577.5 169.1 L580.2 169.3 L582.8 169.1 L585.4 168.6 L588.0 167.7 L590.3 166.6 L592.5 165.1 L594.5 163.3 L596.3 161.3 L597.8 159.1 L598.9 156.7 L599.8 154.2 L600.3 151.6 L600.5 149.0 L600.3 146.3 L599.8 143.7 L599.4 142.3 L599.3 141.3 L599.3 140.2 L599.6 139.2 L600.1 138.3 L600.8 137.4 L601.6 136.8 L602.6 136.3 L603.6 136.1 L615.5 134.5 L616.6 134.5 L617.7 134.7 L618.6 135.1 L619.5 135.7 L620.2 136.5 L620.8 137.4 L621.1 138.4 L621.2 139.5Z" fill="none" stroke="#f01414" stroke-width="2.250" stroke-linejoin="round"/>
 <path d="M892 408.800 L897.500 404 L903 409" fill="none" stroke="#e8d820" stroke-width="1.400"/>
</svg>
<div class="a" style="left:259px;top:672px;width:757px;height:3px;background:#a0a0a0;"></div>

<!-- log -->
<div class="a" style="left:262px;top:675px;width:754px;height:65px;background:#fff;"></div>
<div class="a" style="left:262px;top:688px;width:754px;height:13px;background:#3399ff;"></div>
<div class="t" style="left:263.600px;top:675px;line-height:13px;letter-spacing:-0.091px;">Toolpath Profile1 distance : 1786.98750425426 + rapids : 0 = total : 1786.98750425426</div>
<div class="t" style="left:263.600px;top:688px;line-height:13px;color:#fff;letter-spacing:-0.112px;">Estimated Toolpath Profile1 duration : 00:08:56 + rapids : 00:00:00 = total : 00:08:56</div>

<!-- status bar -->
<div class="a" style="left:8px;top:740px;width:1008px;height:20px;background:#f0f0f0;"></div>
<div class="a" style="left:8px;top:742px;width:642px;height:17px;box-sizing:border-box;border:1px solid;border-color:#a0a0a0 #fff #fff #a0a0a0;"></div>
<div class="a" style="left:652px;top:742px;width:198px;height:17px;box-sizing:border-box;border:1px solid;border-color:#a0a0a0 #fff #fff #a0a0a0;"></div>
<div class="a" style="left:852px;top:742px;width:148px;height:17px;box-sizing:border-box;border:1px solid;border-color:#a0a0a0 #fff #fff #a0a0a0;"></div>
<div class="t" style="left:654px;top:744px;letter-spacing:-0.269px;">Property changed</div>
<div class="t" style="left:917.300px;top:744px;letter-spacing:-0.155px;">-26.1818, 0.8838</div>
<svg class="a" style="left:1002px;top:746px" width="14" height="14" viewBox="0 0 14 14"><path d="M13 2 L2 13 M13 6 L6 13 M13 10 L10 13" stroke="#b0b0b0" stroke-width="1.200"/><path d="M13.800 2.800 L2.800 13.800 M13.800 6.800 L6.800 13.800 M13.800 10.800 L10.800 13.800" stroke="#fff" stroke-width="1"/></svg>

<div class="a" style="left:297px;top:366px;width:247px;height:330px;box-sizing:border-box;background:#fcfcfc;border:1px solid #979797;box-shadow:3px 3px 4px rgba(0,0,0,.45);"></div>
<div class="a" style="left:299px;top:368px;width:23px;height:326px;background:linear-gradient(90deg,#f9f9f9 0,#f4f4f4 65%,#ebebeb 100%);"></div>
<div class="t ui" style="left:333.2px;top:371px;letter-spacing:-0.074px;">View</div>
<svg class="a" style="left:527px;top:375px" width="5" height="8" viewBox="0 0 5 8"><path d="M.5 .5 L4.300 4 L.5 7.500Z" fill="#000"/></svg>
<div class="t ui" style="left:333.2px;top:393px;letter-spacing:0.030px;">Transform</div>
<svg class="a" style="left:527px;top:397px" width="5" height="8" viewBox="0 0 5 8"><path d="M.5 .5 L4.300 4 L.5 7.500Z" fill="#000"/></svg>
<div class="t ui" style="left:333.2px;top:415px;letter-spacing:-0.168px;">Edit</div>
<svg class="a" style="left:527px;top:419px" width="5" height="8" viewBox="0 0 5 8"><path d="M.5 .5 L4.300 4 L.5 7.500Z" fill="#000"/></svg>
<div class="t ui" style="left:333.2px;top:437px;letter-spacing:-0.254px;">Draw</div>
<svg class="a" style="left:527px;top:441px" width="5" height="8" viewBox="0 0 5 8"><path d="M.5 .5 L4.300 4 L.5 7.500Z" fill="#000"/></svg>
<div class="a" style="left:299px;top:456px;width:243px;height:22px;box-sizing:border-box;background:#c4def8;border:1px solid #3a99f7;"></div>
<div class="t ui" style="left:333.2px;top:459px;letter-spacing:0.144px;">Machining</div>
<svg class="a" style="left:527px;top:463px" width="5" height="8" viewBox="0 0 5 8"><path d="M.5 .5 L4.300 4 L.5 7.500Z" fill="#000"/></svg>
<div class="a" style="left:330px;top:481px;width:212px;height:1px;background:#c5c5c5;"></div>
<div class="t ui" style="left:333.2px;top:487px;letter-spacing:-0.186px;">Select All</div>
<div class="t ui" style="left:477.40000000000003px;top:487px;letter-spacing:0.185px;">Ctrl+A</div>
<div class="t ui" style="left:333.2px;top:509px;letter-spacing:-0.212px;">Select All On Layer</div>
<div class="t ui" style="left:445.40000000000003px;top:509px;letter-spacing:0.175px;">Ctrl+Shift+A</div>
<div class="a" style="left:330px;top:531px;width:212px;height:1px;background:#c5c5c5;"></div>
<div class="t ui" style="left:333.2px;top:537px;letter-spacing:-0.057px;">Cut</div>
<div class="t ui" style="left:478.40000000000003px;top:537px;letter-spacing:0.019px;">Ctrl+X</div>
<div class="t ui" style="left:333.2px;top:559px;letter-spacing:-0.004px;">Copy</div>
<div class="t ui" style="left:477.40000000000003px;top:559px;letter-spacing:0.073px;">Ctrl+C</div>
<div class="t ui" style="left:333.2px;top:581px;letter-spacing:-0.534px;">Paste</div>
<div class="t ui" style="left:478.40000000000003px;top:581px;letter-spacing:0.019px;">Ctrl+V</div>
<div class="a" style="left:330px;top:603px;width:212px;height:1px;background:#c5c5c5;"></div>
<div class="t ui" style="left:333.2px;top:609px;letter-spacing:-0.047px;">Undo</div>
<div class="t ui" style="left:478.40000000000003px;top:609px;letter-spacing:0.131px;">Ctrl+Z</div>
<div class="t ui" style="left:333.2px;top:631px;letter-spacing:-0.547px;">Redo</div>
<div class="t ui" style="left:478.40000000000003px;top:631px;letter-spacing:0.019px;">Ctrl+Y</div>
<div class="t ui" style="left:333.2px;top:653px;letter-spacing:-0.004px;">Polyline</div>
<svg class="a" style="left:527px;top:657px" width="5" height="8" viewBox="0 0 5 8"><path d="M.5 .5 L4.300 4 L.5 7.500Z" fill="#000"/></svg>
<div class="t ui" style="left:333.2px;top:675px;letter-spacing:0.112px;">Holding Tabs</div>
<svg class="a" style="left:527px;top:679px" width="5" height="8" viewBox="0 0 5 8"><path d="M.5 .5 L4.300 4 L.5 7.500Z" fill="#000"/></svg>
<div class="a" style="left:543px;top:457px;width:216px;height:163px;box-sizing:border-box;background:#fcfcfc;border:1px solid #979797;box-shadow:3px 3px 4px rgba(0,0,0,.45);"></div>
<div class="a" style="left:545px;top:459px;width:23px;height:159px;background:linear-gradient(90deg,#f9f9f9 0,#f4f4f4 65%,#ebebeb 100%);"></div>
<div class="t ui" style="left:579.5px;top:461px;letter-spacing:0.069px;">Profile</div>
<div class="t ui" style="left:579.5px;top:483px;letter-spacing:-0.112px;">Pocket</div>
<div class="t ui" style="left:579.5px;top:505px;letter-spacing:-0.384px;">Engrave</div>
<div class="t ui" style="left:579.5px;top:527px;letter-spacing:-0.119px;">3D Profile</div>
<div class="t ui" style="left:579.5px;top:549px;letter-spacing:-0.037px;">Drill</div>
<div class="a" style="left:576px;top:571px;width:181px;height:1px;background:#c5c5c5;"></div>
<div class="a" style="left:545px;top:574px;width:212px;height:22px;box-sizing:border-box;background:#c4def8;border:1px solid #3a99f7;"></div>
<div class="t ui" style="left:579.5px;top:577px;letter-spacing:-0.113px;">Generate toolpaths</div>
<div class="t ui" style="left:693.5px;top:577px;letter-spacing:0.081px;">Ctrl+T</div>
<div class="t ui" style="left:579.5px;top:599px;letter-spacing:-0.054px;">Produce gcode</div>
<div class="t ui" style="left:689.5px;top:599px;letter-spacing:0.081px;">Ctrl+W</div>
<svg class="a" style="left:548px;top:461px" width="20" height="106" viewBox="548 460 20 106">
 <g><rect x="550" y="462" width="14" height="14" fill="#000080"/><rect x="549" y="461" width="14" height="14" fill="#b4522a"/><path d="M553 461.500 H559 L562.500 465 V471 L559 474.500 H553 L549.500 471 V465Z" fill="none" stroke="#fff" stroke-width="1.100"/><circle cx="556" cy="468" r="4.500" fill="#b85a2c" stroke="#f4e800" stroke-width="1.200"/></g>
 <g shape-rendering="crispEdges"><rect x="550" y="484" width="14" height="14" fill="#000080"/><rect x="549" y="483" width="14" height="14" fill="#b4522a"/><rect x="550.500" y="484.500" width="11" height="11" fill="none" stroke="#fff"/><rect x="552.500" y="486.500" width="7" height="7" fill="none" stroke="#fff"/><rect x="554.500" y="488.500" width="3" height="3" fill="none" stroke="#fff"/></g>
 <g><rect x="550" y="506" width="14" height="14" fill="#000080"/><rect x="549" y="505" width="14" height="14" fill="#b4522a"/><path d="M560 508 C556 506.500 552.500 508 553.500 510.500 C554 511.500 556 511.500 558 511.500 M561 511.500 H555 C551 512 550.500 516 554 516.500 C557 517 559 515.500 561 516.500" fill="none" stroke="#fff" stroke-width="1.300"/></g>
 <g><rect x="550" y="528" width="14" height="14" fill="#000080"/><rect x="549" y="527" width="14" height="14" fill="#b4522a"/><path d="M552 531 V538 C552 540 560 540 560 538 V531Z" fill="#e8e0d8"/><ellipse cx="556" cy="531" rx="4" ry="1.800" fill="#fff" stroke="#999" stroke-width=".5"/><path d="M558 533 V539.500 C559.500 539 560 538.500 560 538 V532Z" fill="#c03030"/></g>
 <g><rect x="550" y="550" width="14" height="14" fill="#000080"/><rect x="549" y="549" width="14" height="14" fill="#b4522a"/><path d="M554 550 H558 V559 L556 562 L554 559Z" fill="#fff" stroke="#333" stroke-width=".6"/><path d="M554 553 L558 551 M554 556 L558 554 M554 559 L558 557" stroke="#333" stroke-width="1"/></g>
</svg>
<svg class="a" style="left:630px;top:580px" width="16" height="24" viewBox="0 0 16 24"><path d="M1 1.200 V17.200 L4.700 13.700 L7.600 20.200 L9.900 19.100 L7.100 12.900 H12.300Z" fill="#fff" stroke="#000" stroke-width="1" stroke-linejoin="miter"/></svg>
</body></html>
